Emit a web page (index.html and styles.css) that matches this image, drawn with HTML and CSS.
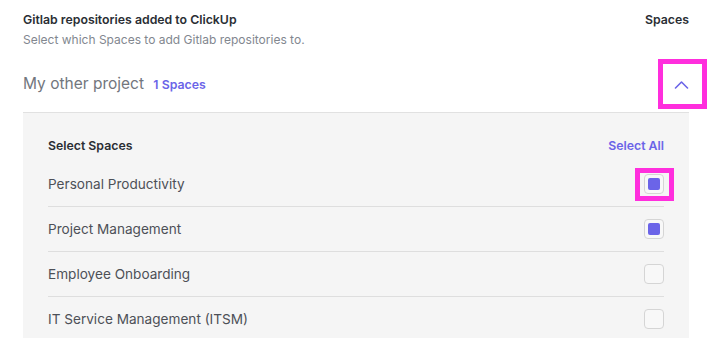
FILE: index.html
```html
<!DOCTYPE html>
<html>
<head>
<meta charset="utf-8">
<link rel="stylesheet" href="styles.css">
</head>
<body>
<div class="page">
  <div class="title-row">
    <div class="title">Gitlab repositories added to ClickUp</div>
    <div class="title">Spaces</div>
  </div>
  <div class="subtitle">Select which Spaces to add Gitlab repositories to.</div>
  <div class="project-row">
    <div class="project-name">My other project <span class="count">1 Spaces</span></div>
    <button class="chevron highlight-chevron" aria-label="Collapse">
      <svg width="15" height="9" viewBox="0 0 15 9"><polyline points="1.5,8 7.5,2 13.5,8" fill="none" stroke="#6b64e8" stroke-width="1.6" stroke-linecap="round" stroke-linejoin="round"/></svg>
    </button>
  </div>
  <div class="panel">
    <div class="panel-head">
      <div class="panel-title">Select Spaces</div>
      <div class="select-all">Select All</div>
    </div>
    <div class="row">
      <span>Personal Productivity</span>
      <span class="check checked highlight-check"><span class="fill"></span></span>
    </div>
    <div class="row">
      <span>Project Management</span>
      <span class="check checked"><span class="fill"></span></span>
    </div>
    <div class="row">
      <span>Employee Onboarding</span>
      <span class="check"></span>
    </div>
    <div class="row">
      <span>IT Service Management (ITSM)</span>
      <span class="check"></span>
    </div>
  </div>
</div>
</body>
</html>
```
FILE: styles.css
```css
html, body {
  margin: 0;
  padding: 0;
  background: #ffffff;
  overflow: hidden;
}
body {
  font-family: Inter, "Noto Sans", sans-serif;
  color: #2a2e34;
}
.page {
  padding: 11px 20px 0 23px;
}
.title-row {
  display: flex;
  justify-content: space-between;
  align-items: center;
  height: 18px;
}
.title {
  font-size: 12.3px;
  font-weight: 600;
  line-height: 18px;
  color: #2a2e34;
}
.subtitle {
  margin-top: 2px;
  font-size: 12px;
  line-height: 18px;
  color: #82878f;
}
.project-row {
  display: flex;
  justify-content: space-between;
  align-items: center;
  height: 56px;
  padding-top: 7px;
}
.project-name {
  font-size: 15.5px;
  line-height: 20px;
  color: #72767d;
}
.count {
  margin-left: 5px;
  font-size: 12.3px;
  font-weight: 600;
  color: #6b64e8;
}
.chevron {
  position: relative;
  border: 0;
  padding: 0;
  margin: 0;
  background: none;
  width: 15px;
  height: 9px;
  display: block;
}
.chevron svg {
  display: block;
}
.highlight-chevron::after {
  content: "";
  position: absolute;
  left: -16px;
  right: -18px;
  top: -21px;
  bottom: -20px;
  border: 5px solid #ff2edd;
}
.panel {
  background: #f5f5f5;
  border-top: 1px solid #e1e1e1;
  padding: 23px 25px 0;
}
.panel-head {
  display: flex;
  justify-content: space-between;
  align-items: center;
  height: 18px;
  margin-bottom: 8px;
}
.panel-title {
  font-size: 12.3px;
  font-weight: 600;
  color: #2a2e34;
}
.select-all {
  font-size: 12.3px;
  font-weight: 600;
  color: #6b64e8;
}
.row {
  display: flex;
  justify-content: space-between;
  align-items: center;
  height: 44px;
  border-bottom: 1px solid #dedede;
  font-size: 13.6px;
  color: #4d5057;
}
.check {
  position: relative;
  box-sizing: border-box;
  width: 20px;
  height: 20px;
  border: 1px solid #d5d5d5;
  border-radius: 4px;
  background: #f8f8f8;
  display: flex;
  align-items: center;
  justify-content: center;
}
.fill {
  width: 12px;
  height: 12px;
  border-radius: 2px;
  background: #6b64e8;
}
.highlight-check::after {
  content: "";
  position: absolute;
  left: -10px;
  right: -11px;
  top: -7px;
  bottom: -8px;
  border: 5px solid #ff2edd;
}
```
